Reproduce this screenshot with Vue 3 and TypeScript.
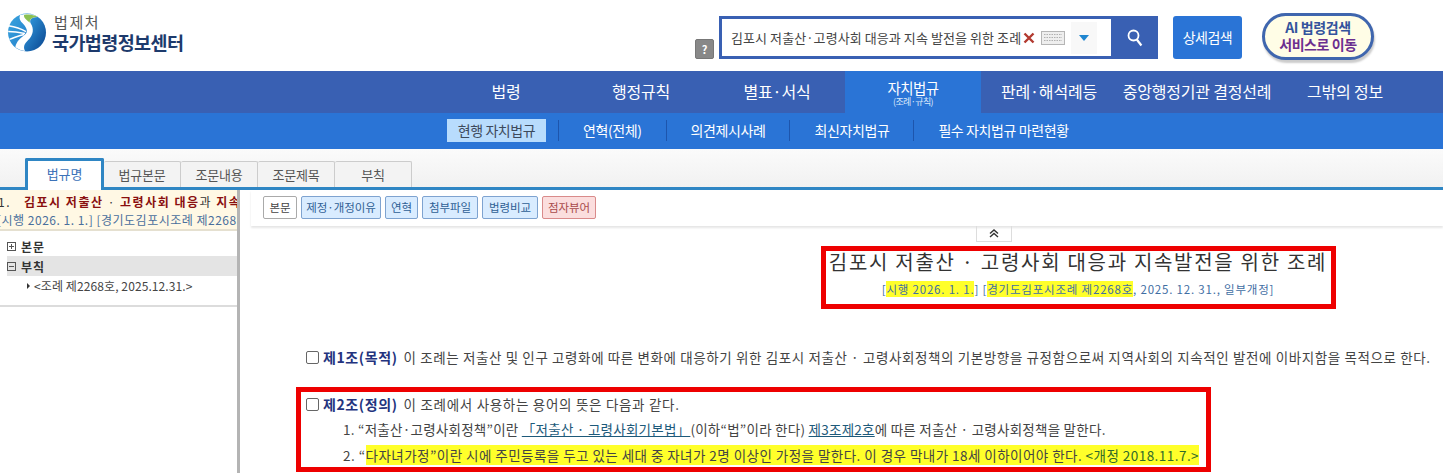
<script setup lang="ts">
const navItems = [
  { label: '법령', w: 120 },
  { label: '행정규칙', w: 150 },
  { label: '별표·서식', w: 129, shift: true },
  { label: '자치법규', w: 136, sub: '(조례·규칙)', active: true },
  { label: '판례·해석례등', w: 136 },
  { label: '중앙행정기관 결정선례', w: 160 },
  { label: '그밖의 정보', w: 136 },
]
const subItems = ['현행 자치법규', '연혁(전체)', '의견제시사례', '최신자치법규', '필수 자치법규 마련현황']
const tabs = ['법규명', '법규본문', '조문내용', '조문제목', '부칙']
const tools = [
  { label: '본문', kind: 't-plain', w: 34 },
  { label: '제정·개정이유', kind: 't-blue', w: 80 },
  { label: '연혁', kind: 't-blue', w: 33 },
  { label: '첨부파일', kind: 't-blue', w: 56 },
  { label: '법령비교', kind: 't-blue', w: 56 },
  { label: '점자뷰어', kind: 't-red', w: 54 },
]
</script>

<template>
  <div class="page">
    <header class="top">
      <div class="logo">
        <svg width="40" height="39" viewBox="0 0 40 40">
          <defs>
            <linearGradient id="lg" x1="0" y1="0" x2="1" y2=".6">
              <stop offset="0" stop-color="#3ba6e0" />
              <stop offset=".55" stop-color="#2a8ad0" />
              <stop offset="1" stop-color="#12569f" />
            </linearGradient>
          </defs>
          <circle cx="20" cy="20" r="19.5" fill="url(#lg)" />
          <path d="M13 2C20 0 27 1 31 4C24 4 22 7 24 11C27 16 27 22 21 28C17 32 16 35 18 39C14 38.5 11 37 8 35C9 29 14 25 18 22C22 19 19 14 15 10C12 7 12 4 13 2Z" fill="#fff" />
          <path d="M17 2C22 1 27 2 31 4C26 4 22 6 23 10C21 8 16 5 17 2Z" fill="#8cc152" />
          <path d="M1 13C8 14 14 16 19 19M.7 19C7 19 13 20 18 21M2 27C8 25 12 23 17 22" stroke="#fff" stroke-width="1.5" fill="none" />
        </svg>
        <div class="logo-text">
          <div class="logo-a">법제처</div>
          <div class="logo-b">국가법령정보센터</div>
        </div>
      </div>
      <div class="search-area">
        <span class="help">?</span>
        <div class="search">
          <div class="search-in">
            <span class="query">김포시 저출산·고령사회 대응과 지속 발전을 위한 조례</span>
            <svg class="x" width="12" height="12" viewBox="0 0 12 12"><path d="M1.5 1.5L10.5 10.5M10.5 1.5L1.5 10.5" stroke="#b23a30" stroke-width="2.4" /></svg>
            <svg class="kbd" width="24" height="14" viewBox="0 0 24 14">
              <rect x=".5" y=".5" width="23" height="13" fill="#eee" stroke="#b5b5b5" />
              <path d="M3 3.5H21M3 6.5H21M3 9.5H21" stroke="#b0b0b0" stroke-dasharray="1.5 1" />
            </svg>
            <span class="drop"><i></i></span>
          </div>
          <button class="search-btn" type="button" aria-label="검색">
            <svg width="16" height="18" viewBox="0 0 16 18" fill="none"><circle cx="6.5" cy="6.5" r="5" stroke="#fff" stroke-width="1.8" /><path d="M9.8 10.5L14.4 16.5" stroke="#fff" stroke-width="2.2" /></svg>
          </button>
        </div>
        <button class="detail" type="button">상세검색</button>
        <div class="ai">
          <div class="ai-a">AI 법령검색</div>
          <div class="ai-b">서비스로 이동</div>
        </div>
      </div>
    </header>

    <nav class="nav">
      <a v-for="n in navItems" :key="n.label" class="nav-item" :class="{ on: n.active, shift: n.shift }" :style="{ width: n.w + 'px' }">
        <span class="nav-l">{{ n.label }}</span>
        <small v-if="n.sub">{{ n.sub }}</small>
      </a>
    </nav>

    <div class="sub">
      <template v-for="(s, i) in subItems" :key="s">
        <span v-if="i" class="sub-sep"></span>
        <a class="sub-item" :class="{ on: i === 0 }">{{ s }}</a>
      </template>
    </div>

    <div class="tabs">
      <span v-for="(t, i) in tabs" :key="t" class="tab" :class="{ on: i === 0 }">{{ t }}</span>
    </div>

    <div class="main">
      <aside class="left">
        <div class="banner">
          <div class="b1">1.<span class="gap"></span><b>김포시 저출산</b> · <b>고령사회 대응</b>과 <b>지속</b></div>
          <div class="b2">[시행 2026. 1. 1.] [경기도김포시조례 제2268</div>
        </div>
        <div class="tree">
          <div class="node"><span class="pm plus"></span><b>본문</b></div>
          <div class="node open"><span class="pm"></span><b>부칙</b></div>
          <div class="leaf"><i></i>&lt;조례 제2268호, 2025.12.31.&gt;</div>
        </div>
      </aside>
      <div class="divider"></div>
      <section class="right">
        <div class="toolbar">
          <span v-for="t in tools" :key="t.label" class="tool" :class="t.kind" :style="{ width: t.w + 'px' }">{{ t.label }}</span>
        </div>
        <div class="collapse">
          <span class="grip"></span>
          <svg width="10" height="9" viewBox="0 0 10 9" fill="none"><path d="M1 4.5L5 1L9 4.5M1 8L5 4.5L9 8" stroke="#333" stroke-width="1.4" /></svg>
          <span class="grip"></span>
        </div>
        <div class="title-block">
          <h1>김포시 저출산 · 고령사회 대응과 지속발전을 위한 조례</h1>
          <p>[<mark>시행 2026. 1. 1.</mark>] [<mark>경기도김포시조례 제2268호</mark>, 2025. 12. 31., 일부개정]</p>
        </div>
        <div class="art first">
          <span class="cb"></span><b>제1조(목적)</b> 이 조례는 저출산 및 인구 고령화에 따른 변화에 대응하기 위한 김포시 저출산 · 고령사회정책의 기본방향을 규정함으로써 지역사회의 지속적인 발전에 이바지함을 목적으로 한다.
        </div>
        <div class="art second">
          <span class="cb"></span><b>제2조(정의)</b> 이 조례에서 사용하는 용어의 뜻은 다음과 같다.
        </div>
        <div class="item i1">1. “저출산·고령사회정책”이란 <a>「저출산 · 고령사회기본법」</a>(이하“법”이라 한다) <a>제3조제2호</a>에 따른 저출산 · 고령사회정책을 말한다.</div>
        <div class="item i2">2. “<mark>다자녀가정”이란 시에 주민등록을 두고 있는 세대 중 자녀가 2명 이상인 가정을 말한다. 이 경우 막내가 18세 이하이어야 한다. <em>&lt;개정 2018.11.7.&gt;</em></mark></div>
        <div class="frame r1"></div>
        <div class="frame r2"></div>
      </section>
    </div>
  </div>
</template>

<style>
html, body { margin: 0; background: #fff; overflow: hidden; }
</style>

<style scoped>
.page { width: 1443px; height: 473px; overflow: hidden; font-family: "Noto Sans CJK KR", "Noto Sans", sans-serif; color: #333; position: relative; }
.top { height: 71px; display: flex; justify-content: space-between; box-sizing: border-box; }
.logo { display: flex; padding: 13px 0 0 7px; gap: 5px; }
.logo-a { font-size: 15px; line-height: 18px; letter-spacing: 1.6px; color: #555; padding-left: 2px; margin-top: 0; }
.logo-b { font-size: 18.5px; line-height: 22px; font-weight: 700; letter-spacing: -.6px; color: #1d3a6c; margin-top: 0; }
.search-area { display: flex; align-items: flex-start; padding: 16px 0 0 0; width: 748px; box-sizing: border-box; flex: none; }
.help { width: 19px; height: 20px; margin-top: 23px; box-sizing: border-box; background: #888; border: 1px solid #777; border-radius: 2px; color: #fff; font-size: 11px; font-weight: 700; line-height: 18px; text-align: center; flex: none; }
.search { margin-left: 5px; width: 439px; height: 43px; background: #3960b3; display: flex; box-sizing: border-box; padding: 3px 0 3px 3px; flex: none; }
.search-in { width: 389px; background: #fff; display: flex; align-items: center; padding-left: 9px; box-sizing: border-box; flex: none; }
.query { font-size: 13px; letter-spacing: .08px; white-space: nowrap; width: 292px; color: #444; overflow: hidden; flex: none; }
.x { flex: none; }
.kbd { margin-left: 6px; flex: none; }
.drop { width: 26px; height: 32px; margin-left: 6px; background: #f8f8f8; display: flex; align-items: center; justify-content: center; flex: none; }
.drop i { width: 0; height: 0; border-left: 5px solid transparent; border-right: 5px solid transparent; border-top: 6px solid #1f86d0; }
.search-btn { flex: 1; border: 0; background: none; padding: 0; display: flex; align-items: center; justify-content: center; }
.detail { margin-left: 15px; width: 69px; height: 43px; border: 0; border-radius: 3px; background: #2a74d6; color: #fff; font: 400 14px/43px "Noto Sans CJK KR", sans-serif; letter-spacing: -.5px; padding: 0; flex: none; }
.ai { margin: -3px 0 0 20px; width: 112px; height: 47px; box-sizing: border-box; border: 3px solid #3f66ae; border-radius: 24px; background: #fffde6; text-align: center; box-shadow: 1px 3px 2px #ccc; font-weight: 700; font-size: 14px; line-height: 17px; padding-top: 3px; letter-spacing: -.4px; flex: none; white-space: nowrap; }
.ai-a { color: #33539d; }
.ai-b { color: #6c2f8f; }
.nav { height: 42px; background: #3960b3; display: flex; padding-left: 446px; box-sizing: border-box; }
.nav-item { display: flex; flex-direction: column; align-items: center; justify-content: center; color: #fff; flex: none; box-sizing: border-box; padding-bottom: 2px; }
.nav-item.shift { padding-right: 7px; }
.nav-l { font-size: 16px; line-height: 20px; letter-spacing: -.2px; white-space: nowrap; }
.nav-item.on { background: #2a74d6; padding: 1px 0 0; }
.nav-item.on .nav-l { font-size: 14.5px; line-height: 17px; letter-spacing: -.6px; }
.nav-item small { font-size: 9px; line-height: 11px; letter-spacing: -.6px; color: #dbe8fa; }
.sub { height: 36px; background: #2a74d6; display: flex; align-items: center; padding: 0 0 1px 447px; box-sizing: border-box; }
.sub-item { color: #fff; font-size: 14px; letter-spacing: -.4px; white-space: nowrap; line-height: 23px; }
.sub-item.on { background: #b8dcfd; color: #3d4a5c; width: 99px; text-align: center; }
.sub-sep { width: 1px; height: 21px; background: #1d55ad; margin: 0 24px; }
.sub-item.on + .sub-sep { margin-left: 12px; }
.tabs { height: 38px; background: linear-gradient(#fbfbfb, #f1f1f1); display: flex; align-items: flex-end; padding-left: 25px; border-bottom: 3px solid #2f86c4; box-sizing: content-box; }
.tab { width: 76px; height: 25px; background: #f3f3f3; border: 1px solid #ccc; border-bottom: 0; border-left: 0; border-radius: 2px 2px 0 0; text-align: center; font-size: 13px; line-height: 25px; letter-spacing: -.2px; color: #555; }
.tab.on { width: 73px; line-height: 26px; background: #fff; border: 3px solid #2f86c4; border-bottom: 0; color: #3c72b8; margin-bottom: -3px; position: relative; height: 26px; padding-bottom: 3px; }
.main { display: flex; height: 283px; }
.left { width: 237px; flex: none; overflow: hidden; }
.banner { height: 41px; box-sizing: border-box; background: #fff8e4; border-bottom: 2px solid #e5e0d0; padding-top: 2px; white-space: nowrap; font-size: 12px; line-height: 19px; overflow: hidden; }
.b1 { color: #333; letter-spacing: 1.5px; margin-left: -2px; }
.gap { display: inline-block; width: 13px; }
.b1 b { color: #8a0f0f; font-weight: 700; }
.b2 { color: #4a6f9c; letter-spacing: .5px; margin-left: -3px; margin-top: -1px; }
.tree { padding-top: 5px; border-bottom: 2px solid #dcdcdc; height: 69px; box-sizing: content-box; }
.node { height: 20px; margin-left: 7px; display: flex; align-items: center; font-size: 12px; letter-spacing: .9px; color: #333; }
.node b { font-weight: 700; }
.node.open { background: #e4e4e4; }
.pm { width: 7px; height: 7px; border: 1px solid #555; margin-right: 5px; position: relative; background: linear-gradient(#555, #555) center / 5px 1px no-repeat; }
.pm.plus::after { content: ""; position: absolute; left: 3px; top: 1px; width: 1px; height: 5px; background: #555; }
.leaf { padding-left: 27px; font-size: 12px; line-height: 20px; letter-spacing: .1px; color: #444; display: flex; align-items: center; white-space: nowrap; }
.leaf i { width: 0; height: 0; border-left: 3px solid #333; border-top: 3px solid transparent; border-bottom: 3px solid transparent; margin-right: 4px; }
.divider { width: 3px; background: #b4b4b4; flex: none; }
.right { flex: 1; min-width: 0; position: relative; font-size: 13.5px; }
.toolbar { height: 36px; box-sizing: border-box; padding: 6px 0 0 12px; display: flex; gap: 4px; background: #fff; box-shadow: 0 2px 2px #e6e6e6; margin-left: 11px; }
.tool { height: 23px; box-sizing: border-box; border: 1px solid #7ea3d0; background: #d9ecff; border-radius: 2px; color: #2f5f95; font-size: 11.5px; line-height: 21px; text-align: center; letter-spacing: -.05px; white-space: nowrap; flex: none; }
.t-plain { background: #fff; border-color: #aaa; color: #444; }
.t-red { background: #fbdede; border-color: #d98b8b; color: #a94b4b; }
.collapse { width: 36px; height: 16px; margin: 0 0 0 736px; border: 1px solid #ddd; border-top: 0; display: flex; align-items: center; justify-content: space-between; box-sizing: border-box; padding: 0 1px; }
.grip { width: 6px; height: 13px; background: radial-gradient(#aaa 40%, transparent 45%) 0 0 / 2px 2px; }
.title-block { width: 514px; margin-left: 581px; text-align: center; white-space: nowrap; }
.title-block h1 { margin: 8px 0 0; font-size: 20px; line-height: 24px; font-weight: 400; letter-spacing: 1.7px; color: #333; }
.title-block p { margin: 7px 0 0; font-size: 11.5px; line-height: 16px; letter-spacing: .8px; color: #3f6ea3; }
mark { background: #ffff2a; color: inherit; }
.art { white-space: nowrap; padding-left: 66px; display: flex; align-items: center; line-height: 20px; color: #444; letter-spacing: .7px; }
.art.first { letter-spacing: .61px; }
.art b { color: #23337e; font-size: 14px; margin-right: 6px; letter-spacing: .6px; }
.first { margin-top: 50px; }
.second { margin-top: 27px; }
.cb { width: 11px; height: 11px; border: 1px solid #666; border-radius: 2px; margin-right: 4px; flex: none; background: #fff; }
.item { white-space: nowrap; padding-left: 103px; line-height: 20px; margin-top: 5px; color: #444; }
.i1 { letter-spacing: .25px; }
.i2 { letter-spacing: .46px; margin-top: 6px; }
.item a { color: #1d5a7a; text-decoration: underline; }
.item em { font-style: normal; color: #2f6a2a; }
.frame { position: absolute; border: 5px solid #ee0000; box-sizing: border-box; pointer-events: none; }
.r1 { left: 581px; top: 56px; width: 515px; height: 63px; }
.r2 { left: 56px; top: 197px; width: 915px; height: 85px; }
</style>
